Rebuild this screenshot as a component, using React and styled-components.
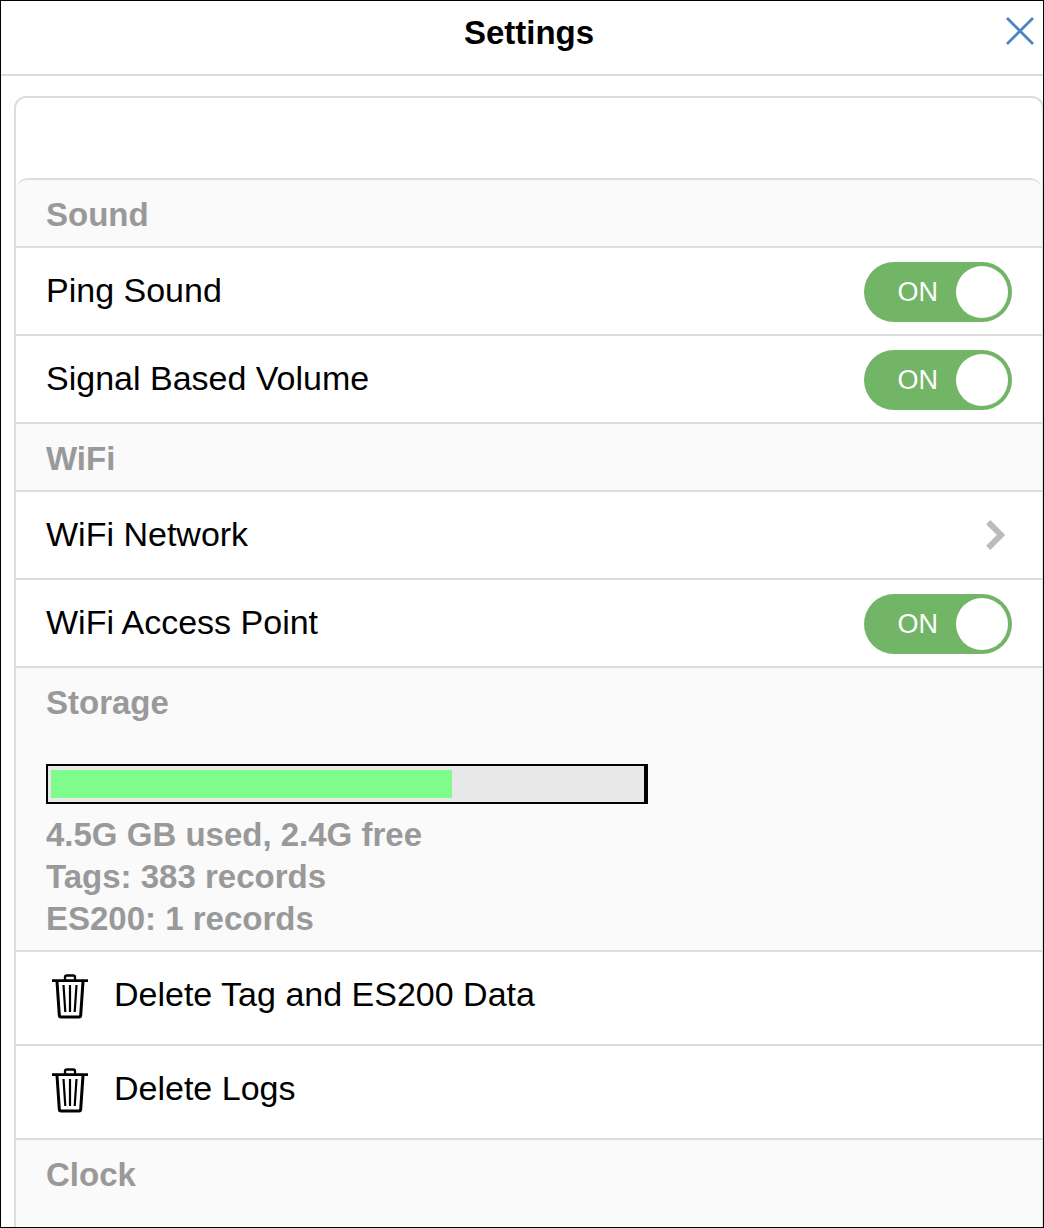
import React, { useState } from "react";
import styled, { createGlobalStyle } from "styled-components";

const line = "#dddddd";
const muted = "#999999";

const GlobalStyle = createGlobalStyle`
  *, *::before, *::after { box-sizing: border-box; }
  body {
    margin: 0;
    background: #fff;
    color: #000;
    font-family: "Liberation Sans", Arial, sans-serif;
  }
`;

const Page = styled.div`
  display: flex;
  flex-direction: column;
  height: 100vh;
  border: 1px solid #000;
  overflow: hidden;
`;

const Header = styled.header`
  display: grid;
  grid-template-columns: 1fr auto 1fr;
  align-items: start;
  padding: 11px 0 20px 14px;
  border-bottom: 2px solid ${line};
`;

const Title = styled.h1`
  grid-column: 2;
  margin: 0;
  font-size: 33px;
  line-height: 42px;
  font-weight: 700;
`;

const CloseButton = styled.button`
  justify-self: end;
  display: flex;
  margin-right: 8px;
  padding: 4px 0;
  border: 0;
  background: none;
  cursor: pointer;
`;

const Card = styled.main`
  flex: 1;
  display: flex;
  flex-direction: column;
  margin: 20px -1px 0 13px;
  border: 2px solid ${line};
  border-bottom: 0;
  border-radius: 12px 12px 0 0;
`;

const List = styled.div`
  flex: 1;
  display: flex;
  flex-direction: column;
  margin-top: 80px;
  border-top: 2px solid ${line};
  border-radius: 12px 12px 0 0;
  overflow: hidden;
`;

const Section = styled.section`
  flex: ${(p) => (p.$fill ? "1" : "none")};
  background: #fafafa;
`;

const SectionHead = styled.div`
  padding: 14px 30px 10px;
  color: ${muted};
  font-size: 33px;
  line-height: 42px;
  font-weight: 700;
`;

const SectionTitle = styled.h2`
  margin: 0;
  font: inherit;
`;

const Rows = styled.ul`
  margin: 0;
  padding: 0;
  list-style: none;
  background: #fff;
  border-bottom: 2px solid ${line};
`;

const Item = styled.li`
  border-top: 2px solid ${line};
`;

const Row = styled.div`
  display: flex;
  align-items: flex-start;
  width: 100%;
  min-height: ${(p) => (p.$tall ? 92 : 86)}px;
  padding: 14px 30px 12px;
  border: 0;
  background: none;
  color: inherit;
  font: inherit;
  font-size: 34px;
  line-height: 56px;
  text-align: left;
  text-decoration: none;
  cursor: pointer;
`;

const RowText = styled.span`
  flex: 1;
`;

const Switch = styled.span`
  display: flex;
  align-items: center;
  justify-content: flex-end;
  flex-direction: ${(p) => (p.$on ? "row" : "row-reverse")};
  gap: 18px;
  width: 148px;
  height: 60px;
  padding: 4px;
  border-radius: 30px;
  background: ${(p) => (p.$on ? "#72b566" : "#b5b5b5")};
  color: #fff;
  font-size: 27px;
  line-height: 52px;
`;

const Knob = styled.input`
  appearance: none;
  width: 52px;
  height: 52px;
  margin: 0;
  border-radius: 50%;
  background: #fff;
  cursor: pointer;
`;

const Chevron = styled.svg`
  margin: 14px 6px 0 0;
`;

const Trash = styled.svg`
  margin: 8px 26px 0 6px;
`;

const Meter = styled.div`
  max-width: 602px;
  height: 40px;
  margin: 40px 0 10px;
  padding: 4px 3px;
  border: 2px solid #000;
  border-right-width: 4px;
  background: #e8e8e8;
`;

const MeterFill = styled.div`
  height: 100%;
  background: #80fc8c;
`;

const Stat = styled.p`
  margin: 0;
`;

function ToggleRow({ label }) {
  const [on, setOn] = useState(true);
  return (
    <Item>
      <Row as="label">
        <RowText>{label}</RowText>
        <Switch $on={on}>
          {on ? "ON" : "OFF"}
          <Knob type="checkbox" checked={on} onChange={(e) => setOn(e.target.checked)} />
        </Switch>
      </Row>
    </Item>
  );
}

function DeleteRow({ label }) {
  return (
    <Item>
      <Row as="button" type="button" $tall>
        <Trash width="36" height="46" viewBox="0 0 36 46" fill="none" stroke="#000" aria-hidden="true">
          <path d="M0 6.7H36" strokeWidth="2.8" />
          <path d="M13 6V3Q13 1.5 14.7 1.5H21.3Q23 1.5 23 3V6" strokeWidth="2.3" />
          <path d="M5 7.5L7.3 41.2Q7.4 43 9 43H27Q28.6 43 28.7 41.2L31 7.5" strokeWidth="3" />
          <path d="M11.5 11L13.3 38M18 11V38M24.5 11L22.7 38" strokeWidth="2.2" />
        </Trash>
        <RowText>{label}</RowText>
      </Row>
    </Item>
  );
}

const usedPercent = 68;

export default function App() {
  return (
    <>
      <GlobalStyle />
      <Page>
        <Header>
          <Title>Settings</Title>
          <CloseButton type="button" aria-label="Close">
            <svg width="30" height="30" viewBox="0 0 30 30" fill="none" stroke="#4a86c5" strokeWidth="2.8">
              <path d="M2 2L28 28M28 2L2 28" />
            </svg>
          </CloseButton>
        </Header>
        <Card>
          <List>
            <Section>
              <SectionHead>
                <SectionTitle>Sound</SectionTitle>
              </SectionHead>
              <Rows>
                <ToggleRow label="Ping Sound" />
                <ToggleRow label="Signal Based Volume" />
              </Rows>
            </Section>
            <Section>
              <SectionHead>
                <SectionTitle>WiFi</SectionTitle>
              </SectionHead>
              <Rows>
                <Item>
                  <Row as="a" href="#wifi-network">
                    <RowText>WiFi Network</RowText>
                    <Chevron width="20" height="30" viewBox="0 0 20 30" fill="none" stroke="#bbbbbb" strokeWidth="6" aria-hidden="true">
                      <path d="M2.2 2.2L15 15L2.2 27.8" />
                    </Chevron>
                  </Row>
                </Item>
                <ToggleRow label="WiFi Access Point" />
              </Rows>
            </Section>
            <Section>
              <SectionHead>
                <SectionTitle>Storage</SectionTitle>
                <Meter role="progressbar" aria-label="Storage used" aria-valuenow={usedPercent}>
                  <MeterFill style={{ width: `${usedPercent}%` }} />
                </Meter>
                <Stat>4.5G GB used, 2.4G free</Stat>
                <Stat>Tags: 383 records</Stat>
                <Stat>ES200: 1 records</Stat>
              </SectionHead>
              <Rows>
                <DeleteRow label="Delete Tag and ES200 Data" />
                <DeleteRow label="Delete Logs" />
              </Rows>
            </Section>
            <Section $fill>
              <SectionHead>
                <SectionTitle>Clock</SectionTitle>
              </SectionHead>
            </Section>
          </List>
        </Card>
      </Page>
    </>
  );
}
